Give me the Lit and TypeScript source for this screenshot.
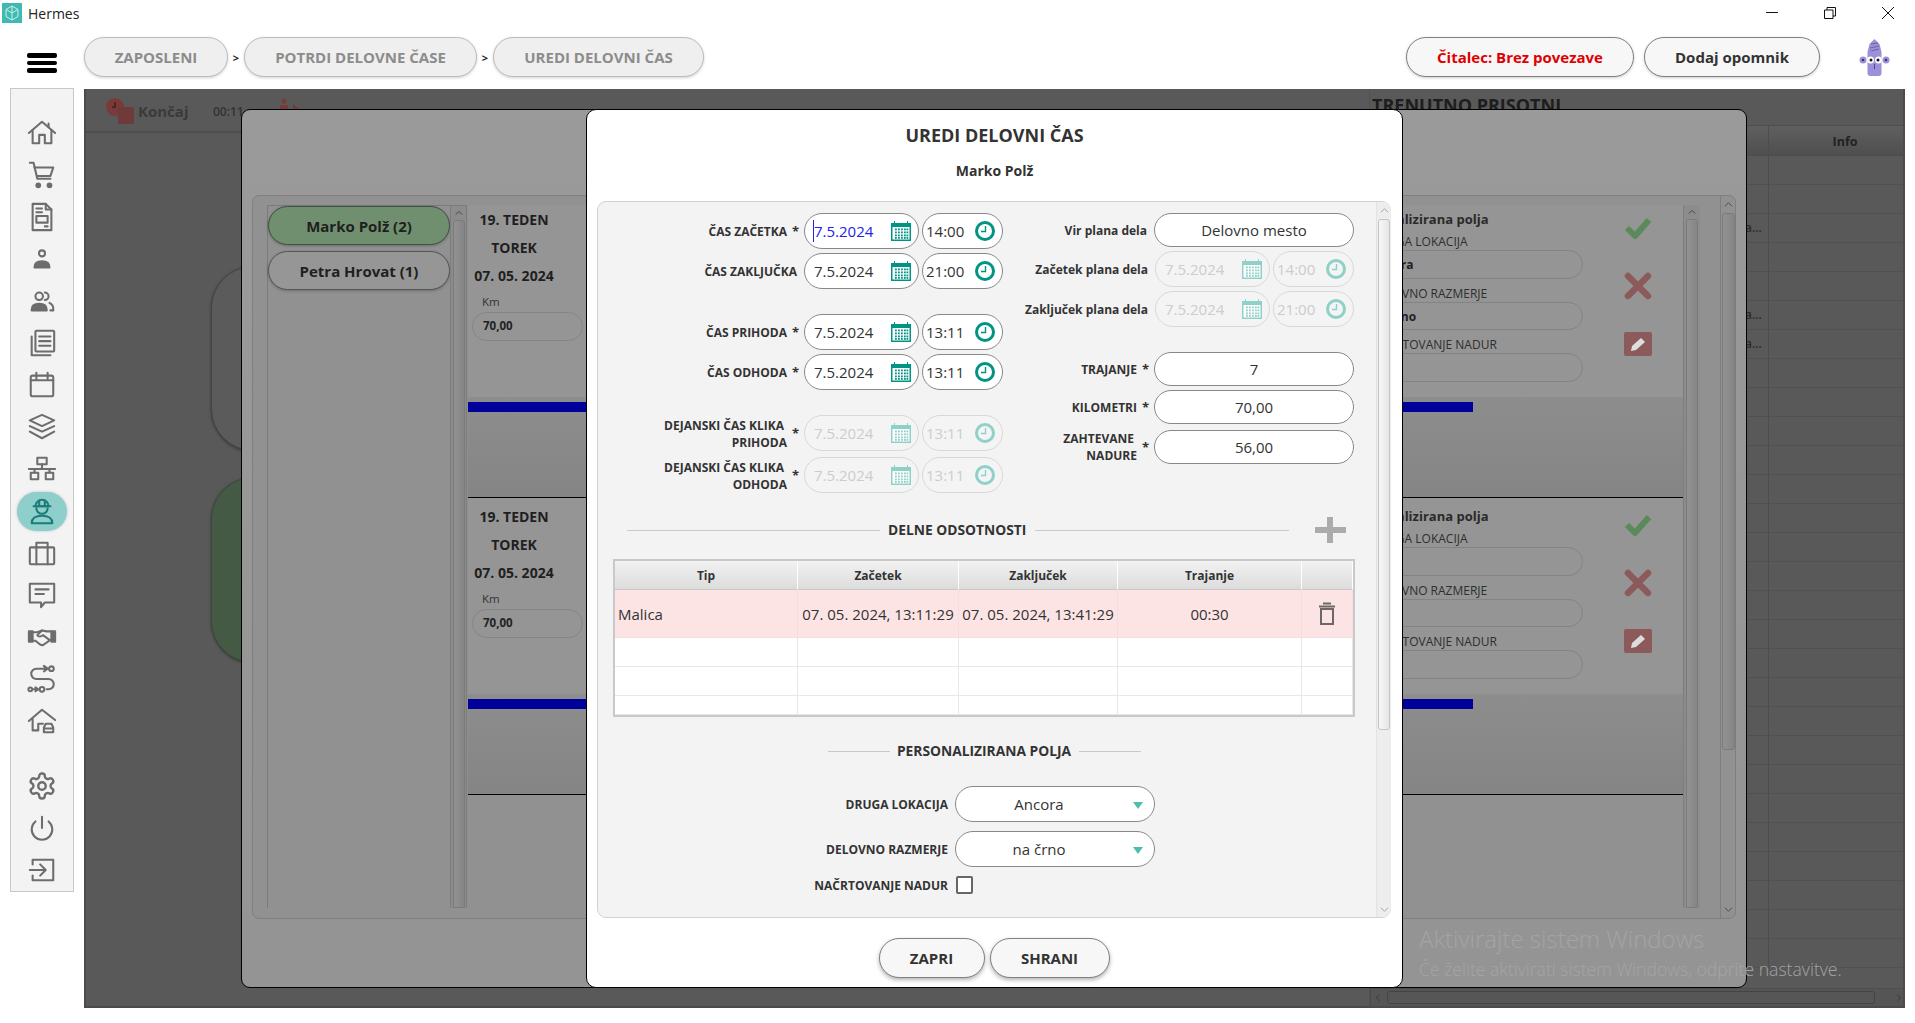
import { LitElement, html, css, svg } from "lit";
import { customElement } from "lit/decorators.js";

const sideIcons = [
  svg`<path d="M2 16 16 4l14 12"/><path d="M6 13v14h7v-9h6v9h7V13"/><path d="M23 6v3"/>`,
  svg`<path d="M3 3h4l4 17h14"/><path d="M8 8h20l-3 9H11"/><circle cx="12" cy="27" r="2" class="f"/><circle cx="24" cy="27" r="2" class="f"/>`,
  svg`<path d="M6 2h14l6 6v22H6z"/><path d="M20 2v6h6M10 7h6M10 11h6"/><rect x="10" y="15" width="12" height="7"/><path d="M19 26h3"/>`,
  svg`<circle cx="16" cy="10" r="3.2"/><path d="M8 25c0-5 4-6.500 8-6.500s8 1.500 8 6.500z" class="f"/>`,
  svg`<circle cx="13" cy="11" r="4"/><path d="M19 7a4 4 0 0 1 0 8"/><path d="M5 26v-1c0-4 3-6 8-6s8 2 8 6v1z" class="f"/><path d="M24 18c2 1 4 3 4 6v2h-3"/>`,
  svg`<rect x="9" y="3" width="20" height="22" rx="1"/><path d="M13 9h12M13 14h12M13 19h12M5 9v20h20"/>`,
  svg`<rect x="4" y="6" width="24" height="22" rx="2"/><path d="M4 11h24M10 3v6M22 3v6"/>`,
  svg`<path d="M16 3 29 9 16 15 3 9z"/><path d="M3 15l13 6 13-6"/><path d="M3 21l13 7 13-7"/>`,
  svg`<rect x="11" y="4" width="10" height="7"/><path d="M16 11v5M2 16h28M8 16v4M24 16v4"/><rect x="4" y="20" width="8" height="7"/><rect x="20" y="20" width="8" height="7"/>`,
  svg`<path d="M9 11a7 7 0 0 1 14 0z"/><path d="M13 5v5M19 5v5M7 11h18"/><path d="M10 13a6 6 0 0 0 12 0"/><path d="M5 29c0-5 4-8 11-8s11 3 11 8z"/>`,
  svg`<rect x="3" y="10" width="26" height="18" rx="1"/><path d="M10 28V5h12v23"/>`,
  svg`<path d="M3 4h26v20H19l-4 5v-5H3z"/><path d="M9 10h14M9 15h9"/>`,
  svg`<path d="M2 10h4v11H2zM30 10h-4v11h4z" class="f"/><path d="M6 11h5l5-2 5 1h5M6 20h3l5 4c2 1 3 1 4 0l7-5"/><path d="M16 9l-5 5c1 2 4 2 6 0l7 5"/>`,
  svg`<circle cx="26" cy="5" r="2.500"/><path d="M22 5H10a5.500 5.500 0 0 0 0 11h13a5.500 5.500 0 0 1 0 11h-2"/><path d="M18 2l4 3-4 3" class="f"/><circle cx="16" cy="27" r="2.500"/><circle cx="3.500" cy="27" r="2"/><path d="M6 27h4"/><path d="M9 25l3 2-3 2" class="f"/>`,
  svg`<path d="M2 16 16 4l14 11"/><path d="M6 14v12h6v-7h5"/><path d="M18 28v-5l2-4h6l2 4v5zM18 24h10"/>`,
];
const gear = svg`<g transform="scale(1.3333)" stroke-width="1.9"><path d="M12.220 2h-.44a2 2 0 0 0-2 2v.18a2 2 0 0 1-1 1.730l-.43.25a2 2 0 0 1-2 0l-.15-.08a2 2 0 0 0-2.730.73l-.22.38a2 2 0 0 0 .73 2.730l.15.1a2 2 0 0 1 1 1.720v.51a2 2 0 0 1-1 1.740l-.15.09a2 2 0 0 0-.73 2.730l.22.38a2 2 0 0 0 2.730.73l.15-.08a2 2 0 0 1 2 0l.43.25a2 2 0 0 1 1 1.730V20a2 2 0 0 0 2 2h.44a2 2 0 0 0 2-2v-.18a2 2 0 0 1 1-1.730l.43-.25a2 2 0 0 1 2 0l.15.08a2 2 0 0 0 2.730-.73l.22-.39a2 2 0 0 0-.73-2.730l-.15-.08a2 2 0 0 1-1-1.740v-.5a2 2 0 0 1 1-1.740l.15-.09a2 2 0 0 0 .73-2.730l-.22-.38a2 2 0 0 0-2.730-.73l-.15.08a2 2 0 0 1-2 0l-.43-.25a2 2 0 0 1-1-1.730V4a2 2 0 0 0-2-2z"/><circle cx="12" cy="12" r="3"/></g>`;
const power = svg`<path d="M16 4v12"/><path d="M9 9a11 11 0 1 0 14 0"/>`;
const logout = svg`<path d="M6 10V5h22v22H6v-5"/><path d="M3 16h17M14 10l6 6-6 6"/>`;

const calendarIcon = html`<svg class="cal" viewBox="0 0 20 20"><path d="M0 2h3V0h1v2h12V0h1v2h3v18H0z" fill="currentColor"/><rect x="1.500" y="6" width="17" height="12.500" fill="#fff"/><g fill="currentColor">${[7.5, 10.5, 13.5, 16].map((y) =>
  [4, 7, 10, 13, 15.5].map((x) => svg`<rect x="${x}" y="${y}" width="1.800" height="1.800"/>`))}</g></svg>`;
const clockIcon = html`<svg class="clk" viewBox="0 0 20 20"><circle cx="10" cy="10" r="8.500" fill="#fff" stroke="currentColor" stroke-width="3"/><path d="M10.500 5v5.500H6" fill="none" stroke="currentColor" stroke-width="1.400"/></svg>`;

@customElement("app-root")
export class AppRoot extends LitElement {
  static styles = css`
    :host { display: block; width: 100%; height: 1023px; background: #fff; font-family: "Open Sans", "Noto Sans", sans-serif; color: #333; overflow: hidden; }
    * { box-sizing: border-box; }
    .titlebar { height: 26px; display: flex; align-items: center; font-size: 14px; color: #222; position: relative; }
    .appicon { width: 20px; height: 20px; margin: 0 6px 0 2px; display: block; }
    .winbtns { margin-left: auto; display: flex; align-items: center; gap: 46px; padding-right: 21px; }
    .winbtns svg { width: 12px; height: 12px; display: block; stroke: #111; fill: none; stroke-width: 1; }
    .toolbar { height: 62px; display: flex; align-items: flex-start; padding-top: 11px; }
    .burger { margin: 16px 0 0 27px; width: 30px; display: flex; flex-direction: column; gap: 3px; }
    .burger i { display: block; height: 4.500px; background: #000; border-radius: 2px; }
    .crumbs { margin-left: 27px; display: flex; align-items: center; }
    .crumb { height: 40px; border-radius: 20px; background: #efefef; border: 1.500px solid #bdbdbd; display: flex; align-items: center; justify-content: center; font-size: 15px; font-weight: 700; color: #8c8c8c; box-shadow: 0 1px 3px rgba(0,0,0,.18); }
    .c1 { width: 144px; } .c2 { width: 233px; } .c3 { width: 211px; }
    .sep { width: 16px; text-align: center; font-size: 11px; font-weight: 700; color: #222; }
    .tools { margin-left: auto; display: flex; align-items: flex-start; padding-right: 25px; }
    .tbtn { height: 40px; border-radius: 20px; background: #f7f7f7; border: 1.500px solid #808080; display: flex; align-items: center; justify-content: center; font-size: 15px; font-weight: 700; color: #333; box-shadow: 0 1px 3px rgba(0,0,0,.2); }
    .reader { width: 228px; color: #e00000; margin-right: 10px; }
    .remind { width: 176px; margin-right: 39px; }
    .owl { width: 31px; height: 38px; margin-top: 2px; display: block; }
    .body { display: flex; align-items: flex-start; }
    .sidebar { width: 64px; height: 804px; margin-left: 10px; background: #f3f3f3; border: 1px solid #c8c8c8; display: flex; flex-direction: column; align-items: center; padding-top: 23px; }
    .si { width: 50px; height: 42px; flex: none; display: flex; align-items: center; justify-content: center; }
    .si svg { width: 30px; height: 30px; fill: none; stroke: #6d6d6d; stroke-width: 2.200; stroke-linejoin: round; stroke-linecap: round; display: block; }
    .si svg .f { fill: #6d6d6d; }
    .si.active { height: 39px; margin: 1.500px 0; background: #8fcfcb; border-radius: 20px; box-shadow: 0 0 3px rgba(0,0,0,.2); }
    .si.active svg { stroke: #1c7c78; }
    .gapsi { height: 23px; flex: none; }

    .main { position: relative; margin: 1px 0 0 10px; width: 1821px; height: 919px; background: #595959; border: solid #4b4b4b; border-width: 0 2px 2px 2px; display: flex; overflow: hidden; }
    .mleft { width: 1284px; flex: none; border-right: 1px solid #525252; }
    .mtop { height: 44px; border-bottom: 2px solid #4e4e4e; display: flex; align-items: center; padding: 2px 0 0 20px; color: #3a3a3a; }
    .mtop svg.stop { width: 28px; height: 26px; display: block; margin-right: 4px; }
    .konc { font-size: 15px; font-weight: 700; width: 75px; }
    .mtime { font-size: 12px; font-weight: 600; color: #333; width: 66px; }
    .fig { width: 22px; height: 20px; display: block; margin-top: -6px; }
    .bgpills { padding: 133px 0 0 125px; display: flex; flex-direction: column; gap: 26px; }
    .bgpill { width: 200px; height: 185px; border-radius: 42px; border: 1px solid #444; background: #5b5b5b; box-shadow: 0 1px 3px rgba(0,0,0,.4); }
    .bgpill.g { height: 186px; background: #445a44; border-color: #3a4a3a; }
    .mright { flex: 1; min-width: 0; display: flex; flex-direction: column; }
    .mhead { height: 36px; padding: 4px 0 0 2px; font-size: 18px; line-height: 24px; font-weight: 700; color: #1d1d1d; }
    .thead { height: 31px; background: linear-gradient(#5f5f5f, #4f4f4f); display: flex; border-top: 1px solid #4d4d4d; border-bottom: 1px solid #4d4d4d; }
    .tcol1 { width: 399px; flex: none; border-right: 1px solid #4d4d4d; }
    .tcol2 { flex: 1; text-align: center; padding-left: 18px; }
    .thead .tcol2 { font-size: 12.500px; line-height: 31px; font-weight: 700; color: #222; }
    .trows { flex: 1; overflow: hidden; }
    .trow { height: 29px; border-bottom: 1px solid #515151; display: flex; }
    .trow .tcol1 { font-size: 12px; font-weight: 600; color: #2b2b2b; line-height: 28px; padding-left: 375px; white-space: nowrap; }
    .hscroll { height: 18px; background: #555; display: flex; align-items: center; border-top: 1px solid #4e4e4e; border-left: 1px solid #4a4a4a; }
    .hthumb { width: 490px; height: 13px; border: 1px solid #444; border-radius: 3px; background: #565656; }
    .arrow { width: 8px; height: 8px; display: block; stroke: #333; fill: none; stroke-width: 1; flex: none; }
    .hscroll .arrow.l { margin: 0 5px 0 3px; }
    .hscroll .arrow.r { margin-left: 20px; }

    .modal-a { position: absolute; left: 155px; top: 20px; width: 1506px; height: 879px; border: 1px solid #000; border-radius: 9px; background: linear-gradient(#9a9a9a, #949494); padding: 85px 10px 69px; }
    .apanel { height: 724px; border: 1px solid #7f7f7f; border-radius: 7px; background: #919191; display: flex; padding: 9px 0 10px 14px; }
    .alist { width: 200px; flex: none; border: solid #7b7b7b; border-width: 1px 1px 0 1px; display: flex; }
    .pills { width: 182px; display: flex; flex-direction: column; gap: 6px; }
    .ppill { height: 39px; border-radius: 20px; border: 1px solid #555; background: #969696; display: flex; align-items: center; justify-content: center; font-size: 15px; font-weight: 700; color: #1f1f1f; box-shadow: 0 1px 3px rgba(0,0,0,.25); }
    .ppill.on { background: #6f8f6f; border-color: #3e523e; }
    .vbar { width: 16px; flex: none; display: flex; flex-direction: column; align-items: center; background: #8c8c8c; border-left: 1px solid #7d7d7d; padding-top: 3px; }
    .vbar .th { flex: 1; width: 12px; margin-top: 3px; border: 1px solid #7b7b7b; border-radius: 3px 3px 0 0; background: linear-gradient(90deg, #929292, #858585); }
    .cards { width: 1215px; flex: none; margin-left: 1px; overflow: hidden; }
    .cards .card:first-child { margin-top: -4px; }
    .card { height: 297px; display: flex; flex-direction: column; border-bottom: 1px solid #000; }
    .ctop { height: 196px; background: #959595; display: flex; flex: none; }
    .cbot { flex: 1; background: linear-gradient(#8d8d8d, #858585); padding-top: 5px; }
    .bluebar { width: 1005px; height: 10px; background: #00009b; }
    .cday { width: 118px; flex: none; padding-top: 5px; }
    .cday .t { width: 92px; text-align: center; font-size: 14px; line-height: 28px; font-weight: 700; color: #1f1f1f; white-space: nowrap; }
    .km { font-size: 11.500px; line-height: 20px; margin-top: 2px; padding-left: 14px; color: #333; }
    .cinput { margin-left: 4px; width: 111px; height: 29px; border: 1px solid #858585; border-radius: 15px; font-size: 11.500px; font-weight: 700; line-height: 25px; padding-left: 10px; color: #222; }
    .cfields { margin-left: 766px; width: 231px; flex: none; padding-top: 10px; color: #333; }
    .cfields .h { font-size: 13px; font-weight: 700; line-height: 16px; color: #2a2a2a; }
    .cfields .l { font-size: 12px; line-height: 16px; margin-top: 7px; padding-left: 19px; white-space: nowrap; color: #2e2e2e; }
    .cfields .v { height: 28.500px; border: 1px solid #838383; border-radius: 15px; font-size: 12px; font-weight: 700; line-height: 27px; padding-left: 18px; color: #222; }
    .cicons { margin-left: 41px; width: 28px; flex: none; padding-top: 15px; display: flex; flex-direction: column; }
    .cicons svg { width: 28px; display: block; }
    .ck { height: 23px; } .xx { height: 28px; margin-top: 33px; } .ed { height: 24px; margin-top: 32px; }
    .avbar { width: 17px; border-top: 0; }
    .outerbar { margin-left: auto; margin-top: -9px; margin-bottom: -10px; width: 15px; flex: none; display: flex; flex-direction: column; align-items: center; border-left: 1px solid #7f7f7f; padding: 4px 0; }
    .outerbar .th { width: 13px; height: 537px; margin-top: 4px; border: 1px solid #7b7b7b; border-radius: 3px; background: linear-gradient(90deg, #929292, #858585); }
    .outerbar .arrow { stroke: #4a4a4a; width: 9px; height: 9px; }
    .outerbar .arrow.dn { margin-top: auto; }

    .modal-b { position: absolute; left: 500px; top: 20px; width: 817px; height: 879px; border: 1px solid #000; border-radius: 10px; background: #fff; display: flex; flex-direction: column; }
    .btitle { text-align: center; font-size: 18px; font-weight: 700; color: #333; line-height: 24px; padding: 13px 0 0 0; }
    .bname { text-align: center; font-size: 14px; font-weight: 700; color: #333; line-height: 18px; padding-top: 15px; height: 54px; }
    .bpanel { margin: 0 11px 0 10px; height: 717px; border: 1px solid #d2d2d2; border-radius: 9px; background: #f3f3f3; display: flex; }
    .bcontent { width: 778px; flex: none; padding-top: 11px; }
    .bscroll { width: 15px; flex: none; display: flex; flex-direction: column; align-items: center; padding: 4px 0 3px; background: #ededed; border-left: 1px solid #e3e3e3; border-radius: 0 8px 8px 0; }
    .bscroll .th { width: 12px; height: 511px; margin-top: 4px; border: 1px solid #c4c4c4; border-radius: 3px; background: linear-gradient(90deg, #f7f7f7, #e6e6e6); }
    .bscroll .arrow { stroke: #a0a0a0; width: 9px; height: 9px; }
    .bscroll .arrow.dn { margin-top: auto; }
    .forms { display: flex; height: 280px; }
    .fl { width: 405px; flex: none; display: flex; flex-direction: column; }
    .fr { width: 351px; flex: none; }
    .frow { display: flex; align-items: center; justify-content: flex-end; }
    .fl .frow { height: 36px; margin-bottom: 4px; }
    .fl .frow.gapb { margin-bottom: 25px; }
    .fl .frow.tight { margin-bottom: 6px; }
    .lab { font-size: 12px; font-weight: 700; color: #333; text-align: right; line-height: 17px; }
    .lab.two { padding-top: 1px; }
    .lab .in { padding-right: 3px; }
    .star { font-size: 13px; font-weight: 700; color: #333; margin-left: 5px; width: 5px; line-height: 14px; }
    .nostar { width: 10px; flex: none; display: none; }
    .dt { margin-left: 7px; width: 115px; height: 36px; border: 1px solid #888; border-radius: 18px; background: #fff; display: flex; align-items: center; padding: 0 7px 0 9px; font-size: 15px; color: #333; flex: none; }
    .tm { margin-left: 3px; width: 81px; height: 36px; border: 1px solid #888; border-radius: 18px; background: #fff; display: flex; align-items: center; padding: 0 7px 0 3px; font-size: 15px; color: #333; flex: none; }
    .dt svg, .tm svg { margin-left: auto; display: block; width: 20px; height: 20px; color: #009484; }
    .off { border-color: #d8d8d8; color: #ccc; background: #f4f4f4; }
    .off svg { color: #8fd0c8; }
    .off svg circle { fill: #f4f4f4; }
    .caret { border-left: 1px solid #2222ee; color: #2222ee; margin-left: -1px; line-height: 22px; }
    .fr .frow { height: 36px; margin-bottom: 4px; }
    .lab2 { font-size: 12px; font-weight: 700; color: #333; margin-right: 7px; white-space: nowrap; }
    .fr .dt { margin-left: 0; }
    .fr .frow.s { height: 34px; }
    .fr .frow.gapb { margin-bottom: 25px; }
    .fr .frow.tight { margin-bottom: 6px; }
    .box { width: 200px; height: 34px; flex: none; border: 1px solid #888; border-radius: 17px; background: #fff; margin-left: 7px; display: flex; align-items: center; justify-content: center; font-size: 15px; color: #333; }
    .lab2 + .box { margin-left: 0; }
    .sect { display: flex; align-items: center; height: 36px; margin-top: 19px; }
    .sline { height: 1px; background: #c9c9c9; }
    .stxt { font-size: 13.800px; font-weight: 700; color: #333; line-height: 16px; white-space: nowrap; }
    .plus { margin-left: 26px; width: 31px; height: 26px; display: block; }
    .tbl { margin: 11px 0 0 15px; width: 742px; height: 158px; border: 2px solid #c9c9c9; display: grid; grid-template-columns: 183px 161px 159px 184px 51px; grid-template-rows: 29px 48px 29px 29px 19px; background: #fff; }
    .th-c { background: linear-gradient(#f2f2f2, #dcdcdc); border-right: 1px solid #fff; border-bottom: 1px solid #c9c9c9; display: flex; align-items: center; justify-content: center; font-size: 12px; font-weight: 700; color: #333; }
    .td { border-right: 1px solid #e8e8e8; border-bottom: 1px solid #e8e8e8; display: flex; align-items: center; justify-content: center; font-size: 15px; color: #333; white-space: nowrap; }
    .td.p { background: #fde4e4; border-color: #f6dede; }
    .td.lft { justify-content: flex-start; padding-left: 3px; }
    .trash { width: 18px; height: 23px; display: block; }
    .sect2 { display: flex; align-items: center; justify-content: center; height: 16px; margin-top: 26px; padding-right: 5px; }
    .pform { margin-top: 27px; }
    .prow { display: flex; align-items: center; height: 36px; margin-bottom: 9px; }
    .plab { width: 350px; flex: none; text-align: right; font-size: 12px; font-weight: 700; color: #333; }
    .sel { margin-left: 7px; width: 200px; height: 36px; border: 1px solid #888; border-radius: 18px; background: #fff; display: flex; align-items: center; font-size: 15px; color: #333; position: relative; justify-content: center; padding-right: 32px; }
    .sel::after { content: ""; position: absolute; right: 11px; top: 15px; border: solid transparent; border-width: 7px 5px 0; border-top-color: #4dbdb0; }
    .prow.c { height: 18px; margin-top: 3px; }
    .chk { margin-left: 8px; width: 17px; height: 18px; border: 2px solid #666; border-radius: 2px; background: #fff; }
    .bfoot { display: flex; justify-content: center; gap: 5px; margin-top: 20px; margin-left: -1px; }
    .fbtn { height: 40px; border-radius: 20px; background: #f7f7f7; border: 1.500px solid #808080; display: flex; align-items: center; justify-content: center; font-size: 15px; font-weight: 700; color: #333; box-shadow: 0 2px 4px rgba(0,0,0,.3); }
    .fb1 { width: 106px; } .fb2 { width: 120px; }
    .w1 { margin-left: 29px; width: 253px; } .w2 { width: 254px; } .w3 { width: 62px; }
    .m1 { margin: 0 9px 0 8px; } .m2 { margin: 0 8px 0 7px; }
    .wm { position: absolute; left: 1333px; top: 835px; color: #a4a4a4; pointer-events: none; white-space: nowrap; }
    .wm .a { font-size: 24px; font-weight: 300; line-height: 30px; }
    .wm .b { font-size: 17.600px; line-height: 22px; margin-top: 4px; font-weight: 300; }
  `;

  private up() { return html`<svg class="arrow" viewBox="0 0 10 10"><path d="M1 7l4-4 4 4"/></svg>`; }
  private dn() { return html`<svg class="arrow dn" viewBox="0 0 10 10"><path d="M1 3l4 4 4-4"/></svg>`; }

  private card(v: string, w: string) {
    return html`<div class="card">
      <div class="ctop">
        <div class="cday">
          <div class="t">19. TEDEN</div><div class="t">TOREK</div><div class="t">07. 05. 2024</div>
          <div class="km">Km</div><div class="cinput">70,00</div>
        </div>
        <div class="cfields">
          <div class="h">Personalizirana polja</div>
          <div class="l">DRUGA LOKACIJA</div><div class="v">${v}</div>
          <div class="l">DELOVNO RAZMERJE</div><div class="v">${w}</div>
          <div class="l">NAČRTOVANJE NADUR</div><div class="v"></div>
        </div>
        <div class="cicons">
          <svg class="ck" viewBox="0 0 28 23"><path d="M3 12l8 8L25 4" fill="none" stroke="#5a8a5a" stroke-width="6" stroke-linejoin="round"/></svg>
          <svg class="xx" viewBox="0 0 28 28"><path d="M4 4l20 20M24 4 4 24" fill="none" stroke="#8c5a5a" stroke-width="6.500" stroke-linecap="round"/></svg>
          <svg class="ed" viewBox="0 0 28 24"><rect width="28" height="24" rx="2" fill="#8c5a5a"/><path d="M7 19l1-5 9-8 4 4-9 8z" fill="#ddd"/></svg>
        </div>
      </div>
      <div class="cbot"><div class="bluebar"></div></div>
    </div>`;
  }

  private dtRow(label: any, d: string, t: string, off = false, cls = "", star = true, two = false) {
    return html`<div class="frow ${cls}">
      <div class="lab ${two ? "two" : ""}">${label}</div>${star ? html`<div class="star">*</div>` : ""}
      <div class="dt ${off ? "off" : ""}">${d === "caret" ? html`<span class="caret">7.5.2024</span>` : d}${calendarIcon}</div>
      <div class="tm ${off ? "off" : ""}">${t}${clockIcon}</div>
    </div>`;
  }

  render() {
    const rows = Array.from({ length: 28 });
    return html`
      <div class="titlebar">
        <svg class="appicon" viewBox="0 0 20 20"><rect width="20" height="20" fill="#3fbab2"/><path d="M10 3l6 3.500v7L10 17l-6-3.500v-7zM10 3v14M4 6.500l6 3.500 6-3.500" fill="none" stroke="#cdeeea" stroke-width="1"/></svg>
        Hermes
        <div class="winbtns">
          <svg viewBox="0 0 12 12"><path d="M0 5.500h12"/></svg>
          <svg viewBox="0 0 12 12"><path d="M.5 3h8.500v8.500H.5zM3 3V.5h8.500V9H9"/></svg>
          <svg viewBox="0 0 12 12"><path d="M0 0l12 12M12 0 0 12"/></svg>
        </div>
      </div>
      <div class="toolbar">
        <div class="burger"><i></i><i></i><i></i></div>
        <div class="crumbs">
          <div class="crumb c1">ZAPOSLENI</div><div class="sep">&gt;</div>
          <div class="crumb c2">POTRDI DELOVNE ČASE</div><div class="sep">&gt;</div>
          <div class="crumb c3">UREDI DELOVNI ČAS</div>
        </div>
        <div class="tools">
          <div class="tbtn reader">Čitalec: Brez povezave</div>
          <div class="tbtn remind">Dodaj opomnik</div>
          <svg class="owl" viewBox="0 0 31 38">
            <path d="M15.500 0l5 5 2 8v21q0 3-3 3h-8q-3 0-3-3V13l2-8z" fill="#9c90d8"/>
            <path d="M12 5l7-1M11 9l9-2M12 12l8-2" stroke="#6f63ad" stroke-width="1" fill="none"/>
            <circle cx="4" cy="21" r="3.500" fill="#9c90d8"/><circle cx="27" cy="21" r="3.500" fill="#9c90d8"/>
            <circle cx="4" cy="21" r="1.300" fill="#3c3566"/><circle cx="27" cy="21" r="1.300" fill="#3c3566"/>
            <circle cx="11.500" cy="21" r="3.500" fill="#fff"/><circle cx="19.500" cy="21" r="3.500" fill="#fff"/>
            <circle cx="12" cy="21" r="1.500" fill="#111"/><circle cx="19" cy="21" r="1.500" fill="#111"/>
            <path d="M15.500 25v5" stroke="#4d4580" stroke-width="1"/>
          </svg>
        </div>
      </div>
      <div class="body">
        <nav class="sidebar">
          ${sideIcons.map((p, i) => html`<div class="si ${i === 9 ? "active" : ""}"><svg viewBox="0 0 32 32">${p}</svg></div>`)}
          <div class="gapsi"></div>
          ${[gear, power, logout].map((p) => html`<div class="si"><svg viewBox="0 0 32 32">${p}</svg></div>`)}
        </nav>
        <main class="main">
          <div class="mleft">
            <div class="mtop">
              <svg class="stop" viewBox="0 0 28 26"><circle cx="9" cy="9" r="9" fill="#7a3a3a"/><rect x="12" y="9" width="16" height="17" rx="2" fill="#6e3a3a"/><path d="M9 4v5H6" stroke="#3f2020" stroke-width="1.500" fill="none"/></svg>
              <span class="konc">Končaj</span><span class="mtime">00:11</span>
              <svg class="fig" viewBox="0 0 22 20"><circle cx="5" cy="3" r="2.500" fill="#7a3a3a"/><path d="M1 7h8v13H1zM14 6l6 5-6 5z" fill="#7a3a3a"/></svg>
            </div>
            <div class="bgpills"><div class="bgpill"></div><div class="bgpill g"></div></div>
          </div>
          <div class="mright">
            <div class="mhead">TRENUTNO PRISOTNI</div>
            <div class="thead"><div class="tcol1"></div><div class="tcol2">Info</div></div>
            <div class="trows">
              ${rows.map((_, i) => html`<div class="trow"><div class="tcol1">${i === 2 || i === 5 || i === 6 ? "a..." : ""}</div></div>`)}
            </div>
            <div class="hscroll">
              <svg class="arrow l" viewBox="0 0 10 10"><path d="M7 1 3 5l4 4"/></svg>
              <div class="hthumb"></div>
              <svg class="arrow r" viewBox="0 0 10 10"><path d="M3 1l4 4-4 4"/></svg>
            </div>
          </div>

          <section class="modal-a">
            <div class="apanel">
              <div class="alist">
                <div class="pills">
                  <div class="ppill on">Marko Polž (2)</div>
                  <div class="ppill">Petra Hrovat (1)</div>
                </div>
                <div class="vbar">${this.up()}<div class="th"></div></div>
              </div>
              <div class="cards">${this.card("Ancora", "na črno")}${this.card("", "")}</div>
              <div class="vbar avbar">${this.up()}<div class="th"></div></div>
              <div class="outerbar">${this.up()}<div class="th"></div>${this.dn()}</div>
            </div>
          </section>

          <section class="modal-b">
            <div class="btitle">UREDI DELOVNI ČAS</div>
            <div class="bname">Marko Polž</div>
            <div class="bpanel">
              <div class="bcontent">
                <div class="forms">
                  <div class="fl">
                    ${this.dtRow("ČAS ZAČETKA", "caret", "14:00")}
                    ${this.dtRow("ČAS ZAKLJUČKA", "7.5.2024", "21:00", false, "gapb", false)}
                    ${this.dtRow("ČAS PRIHODA", "7.5.2024", "13:11")}
                    ${this.dtRow("ČAS ODHODA", "7.5.2024", "13:11", false, "gapb")}
                    ${this.dtRow(html`<span class="in">DEJANSKI ČAS KLIKA</span><br />PRIHODA`, "7.5.2024", "13:11", true, "tight", true, true)}
                    ${this.dtRow(html`<span class="in">DEJANSKI ČAS KLIKA</span><br />ODHODA`, "7.5.2024", "13:11", true, "", true, true)}
                  </div>
                  <div class="fr">
                    <div class="frow s"><span class="lab2">Vir plana dela</span><div class="box">Delovno mesto</div></div>
                    <div class="frow"><span class="lab2">Začetek plana dela</span><div class="dt off">7.5.2024${calendarIcon}</div><div class="tm off">14:00${clockIcon}</div></div>
                    <div class="frow gapb"><span class="lab2">Zaključek plana dela</span><div class="dt off">7.5.2024${calendarIcon}</div><div class="tm off">21:00${clockIcon}</div></div>
                    <div class="frow s"><span class="lab">TRAJANJE</span><span class="star">*</span><div class="box">7</div></div>
                    <div class="frow s tight"><span class="lab">KILOMETRI</span><span class="star">*</span><div class="box">70,00</div></div>
                    <div class="frow s"><span class="lab"><span class="in">ZAHTEVANE</span><br />NADURE</span><span class="star">*</span><div class="box">56,00</div></div>
                  </div>
                </div>
                <div class="sect">
                  <div class="sline w1"></div>
                  <div class="stxt m1">DELNE ODSOTNOSTI</div>
                  <div class="sline w2"></div>
                  <svg class="plus" viewBox="0 0 31 26"><path d="M12 0h6v10h13v6H18v10h-6V16H0v-6h12z" fill="#ababab"/></svg>
                </div>
                <div class="tbl">
                  <div class="th-c">Tip</div><div class="th-c">Začetek</div><div class="th-c">Zaključek</div><div class="th-c">Trajanje</div><div class="th-c"></div>
                  <div class="td p lft">Malica</div><div class="td p">07. 05. 2024, 13:11:29</div><div class="td p">07. 05. 2024, 13:41:29</div><div class="td p">00:30</div>
                  <div class="td p"><svg class="trash" viewBox="0 0 18 23"><path d="M5 1.500h8M1 4.500h16" stroke="#6f6767" stroke-width="2.200" fill="none"/><rect x="3" y="7" width="12" height="15" fill="none" stroke="#6f6767" stroke-width="2"/></svg></div>
                  ${[0, 1, 2].map(() => html`<div class="td"></div><div class="td"></div><div class="td"></div><div class="td"></div><div class="td"></div>`)}
                </div>
                <div class="sect2">
                  <div class="sline w3"></div>
                  <div class="stxt m2">PERSONALIZIRANA POLJA</div>
                  <div class="sline w3"></div>
                </div>
                <div class="pform">
                  <div class="prow"><div class="plab">DRUGA LOKACIJA</div><div class="sel">Ancora</div></div>
                  <div class="prow"><div class="plab">DELOVNO RAZMERJE</div><div class="sel">na črno</div></div>
                  <div class="prow c"><div class="plab">NAČRTOVANJE NADUR</div><div class="chk"></div></div>
                </div>
              </div>
              <div class="bscroll">${this.up()}<div class="th"></div>${this.dn()}</div>
            </div>
            <div class="bfoot">
              <div class="fbtn fb1">ZAPRI</div>
              <div class="fbtn fb2">SHRANI</div>
            </div>
          </section>
          <div class="wm">
            <div class="a">Aktivirajte sistem Windows</div>
            <div class="b">Če želite aktivirati sistem Windows, odprite nastavitve.</div>
          </div>
        </main>
      </div>
    `;
  }
}
